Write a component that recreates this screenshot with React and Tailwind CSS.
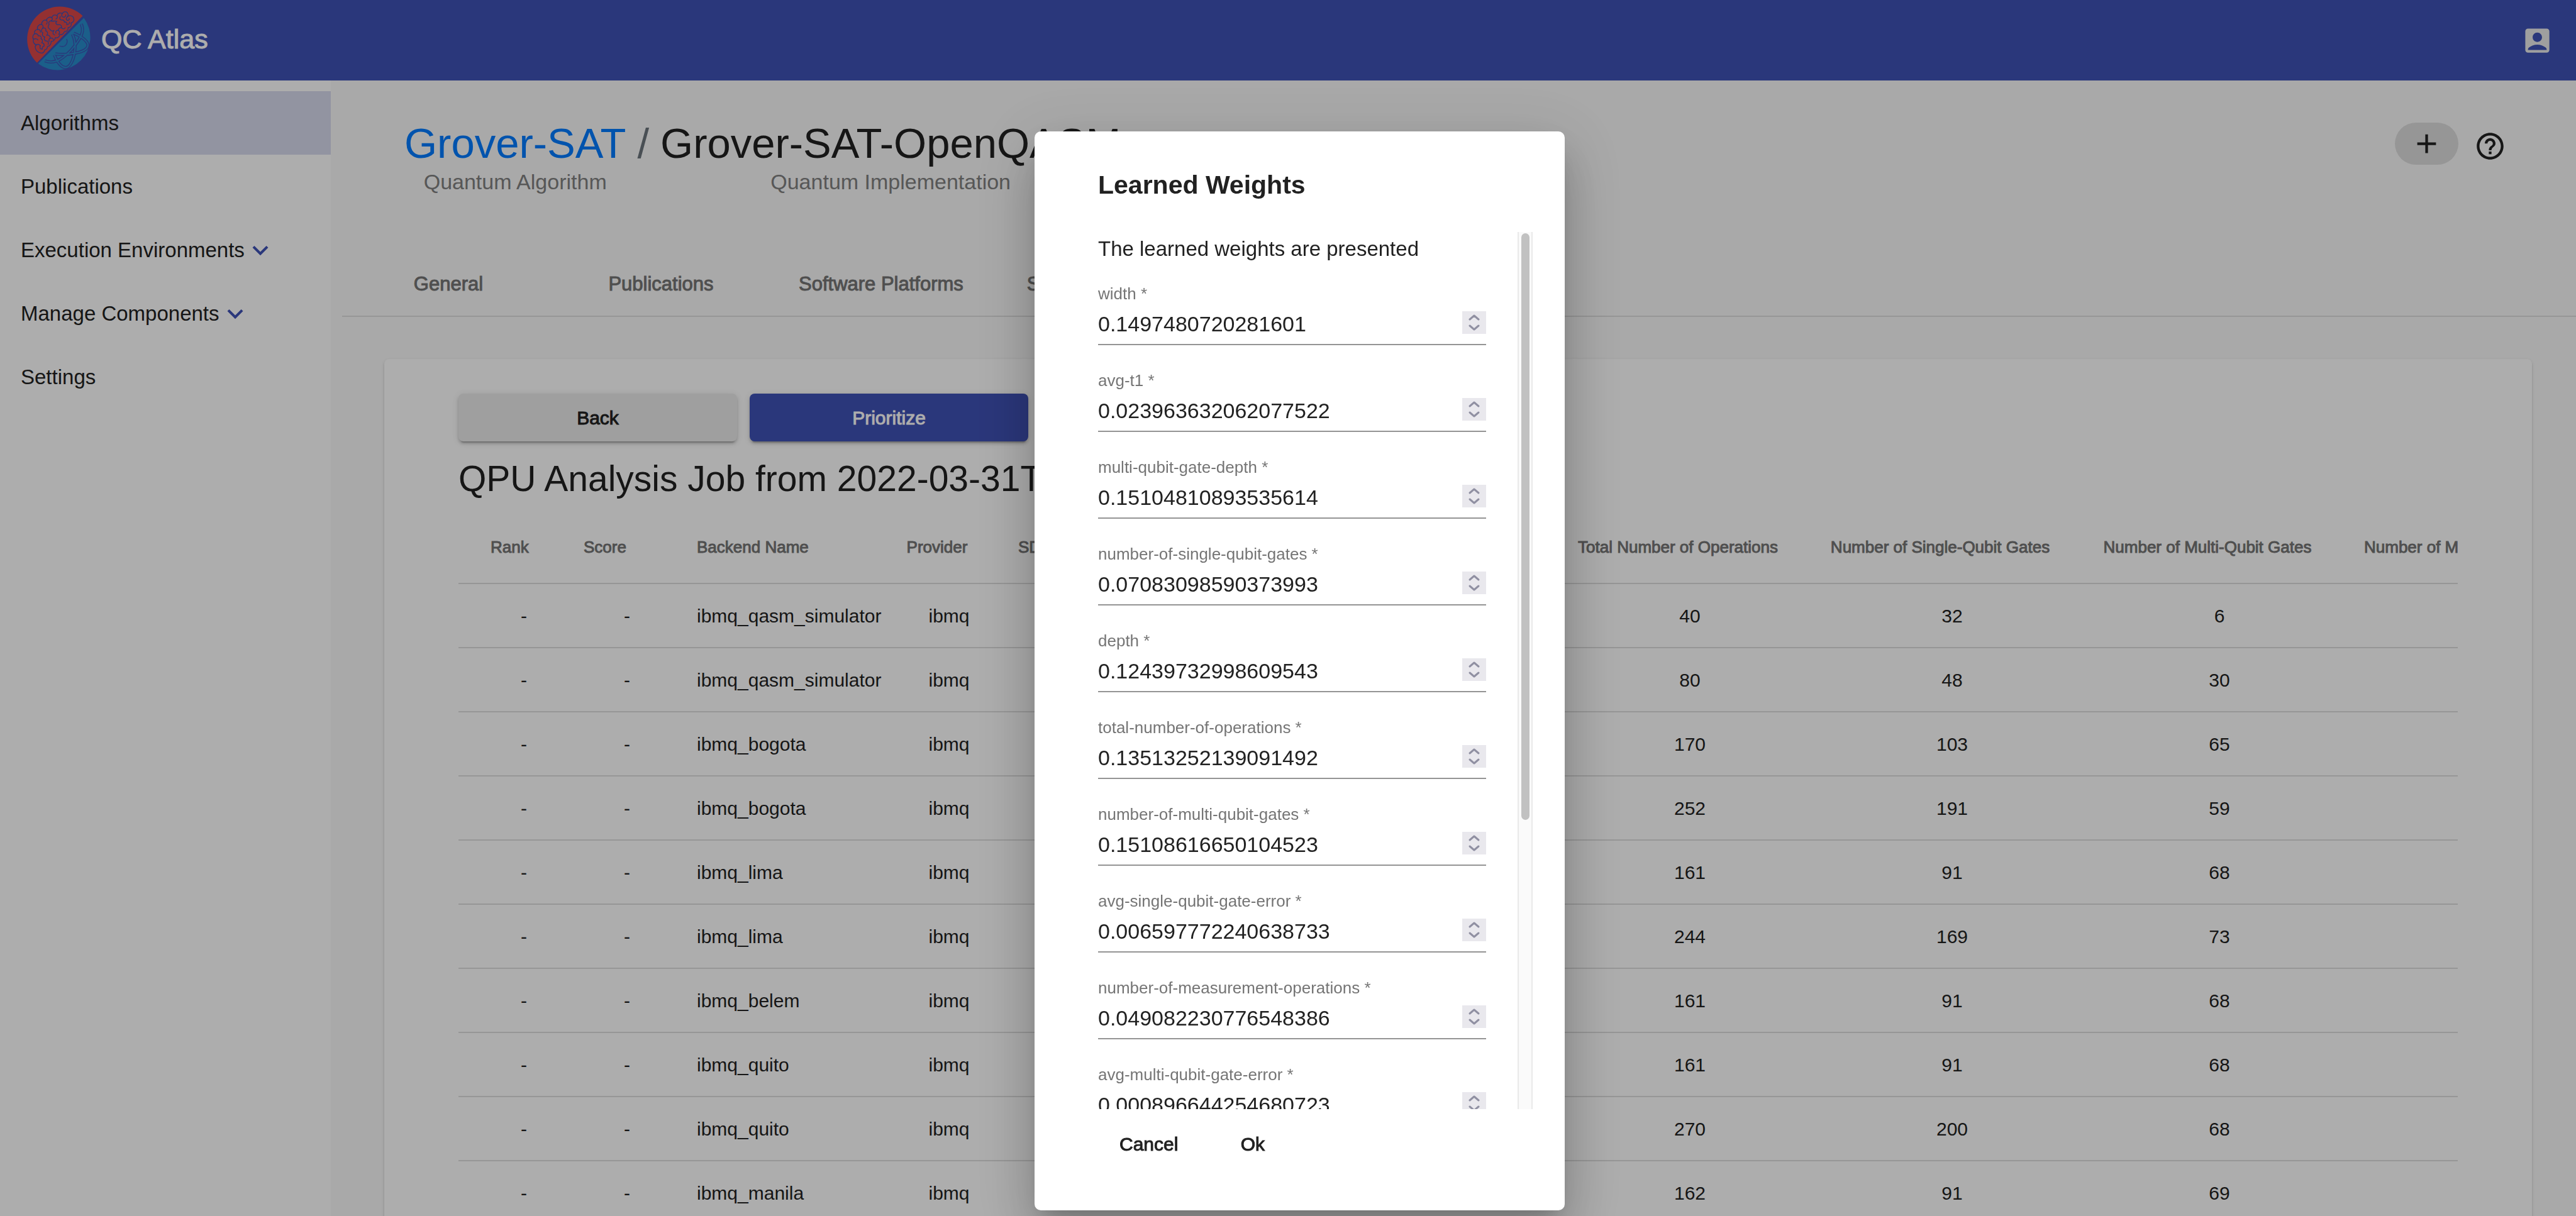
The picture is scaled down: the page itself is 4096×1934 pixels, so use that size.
import { MdAccountBox, MdAdd, MdExpandMore, MdHelpOutline } from "react-icons/md";

const navItems = [
  { label: "Algorithms", active: true },
  { label: "Publications" },
  { label: "Execution Environments", expandable: true },
  { label: "Manage Components", expandable: true },
  { label: "Settings" },
];

const tabs = ["General", "Publications", "Software Platforms", "Selection Criteria"];

const rows = [
  ["ibmq_qasm_simulator", 40, 32, 6],
  ["ibmq_qasm_simulator", 80, 48, 30],
  ["ibmq_bogota", 170, 103, 65],
  ["ibmq_bogota", 252, 191, 59],
  ["ibmq_lima", 161, 91, 68],
  ["ibmq_lima", 244, 169, 73],
  ["ibmq_belem", 161, 91, 68],
  ["ibmq_quito", 161, 91, 68],
  ["ibmq_quito", 270, 200, 68],
  ["ibmq_manila", 162, 91, 69],
];

const weights = [
  ["width", "0.1497480720281601"],
  ["avg-t1", "0.023963632062077522"],
  ["multi-qubit-gate-depth", "0.15104810893535614"],
  ["number-of-single-qubit-gates", "0.07083098590373993"],
  ["depth", "0.12439732998609543"],
  ["total-number-of-operations", "0.13513252139091492"],
  ["number-of-multi-qubit-gates", "0.15108616650104523"],
  ["avg-single-qubit-gate-error", "0.006597772240638733"],
  ["number-of-measurement-operations", "0.049082230776548386"],
  ["avg-multi-qubit-gate-error", "0.000896644254680723"],
];

const orbits = [
  "M332 120 C345 152 340 176 318 212 C290 258 262 290 222 318 C190 342 155 352 117 337",
  "M280 180 C296 215 300 245 292 290 C284 335 265 376 240 377 C212 376 190 345 173 303",
  "M287 174 C330 190 365 218 371 240 C374 268 345 282 300 291 C262 299 225 302 178 297",
];

function Logo() {
  return (
    <svg viewBox="0 0 420 420" className="size-[113px]" role="img" aria-label="QC Atlas logo">
      <path d="M340 72 A193 193 0 1 0 70 348 Z" fill="#db4849" />
      <path d="M347 84 A193 193 0 0 1 77 354 Z" fill="#288ccc" />
      <g fill="none" stroke="#3f51b5" strokeWidth="5" strokeLinecap="round" strokeLinejoin="round">
        <path d="M100 291 C84 292 66 282 62 266 C58 258 60 248 66 243 C50 238 44 222 50 210 C42 200 44 184 56 178 C50 166 60 152 74 152 C68 136 80 120 98 122 C96 104 112 92 126 98 C128 84 144 74 158 82 C160 68 176 62 188 70 C192 56 208 50 220 58 C226 44 246 42 252 58 C256 64 254 72 248 78 C262 64 284 70 287 86 C292 100 282 112 270 114 C278 126 268 142 254 140 C256 154 246 166 232 164 C228 178 216 186 204 182 C204 196 190 206 178 200 C176 214 166 224 154 222 C154 238 146 252 132 252 C132 264 124 272 116 272 C114 282 110 290 100 291 Z" />
        <path d="M66 243 C74 238 84 240 90 248 M50 210 C58 204 70 206 76 214 M56 178 C66 174 76 180 78 190 C90 186 98 196 94 206 M74 152 C84 150 92 158 90 168 M98 122 C106 126 108 136 104 144 C116 140 126 148 122 160" />
        <path d="M126 98 C132 104 132 114 126 120 M104 144 C94 152 94 166 104 172 M122 160 C134 164 136 178 128 186 M158 82 C164 90 160 100 150 102 C140 104 136 114 142 122 M142 122 C132 130 134 146 146 150 C150 160 162 164 170 158" />
        <path d="M150 102 C166 106 176 98 186 104 M188 70 C194 78 190 86 182 90 M220 58 C214 64 214 74 222 78 C232 82 242 74 240 66 M208 76 C200 84 206 98 218 96 C226 94 232 100 232 108" />
        <path d="M186 104 C178 112 182 124 194 124 C206 120 218 128 214 142 M248 78 C240 84 242 96 250 98 C258 100 262 92 260 88 M232 108 C242 106 250 114 246 124 C256 122 264 118 262 108 M214 142 C204 140 194 148 198 158 C186 154 176 164 182 174" />
        <path d="M214 142 C222 150 232 150 236 142 M198 158 C206 166 204 176 198 180 M170 158 C160 168 164 182 174 184 M128 186 C140 184 150 192 148 204 C160 200 168 206 166 214 M104 172 C98 184 106 196 116 196 M94 206 C104 212 104 224 98 230" />
        <path d="M116 196 C108 208 116 222 128 220 C136 222 140 232 136 240 M98 230 C108 232 114 240 112 250 C104 252 98 260 102 268 M90 248 C84 256 88 268 98 268 M148 204 C140 208 138 216 142 222" />
      </g>
      <g fill="none" strokeLinecap="butt">
        <path d={orbits.join(" ")} stroke="#3f51b5" strokeWidth="18" />
        <path d={orbits.join(" ")} stroke="#288ccc" strokeWidth="8" />
        <path d="M245 208 C252 222 248 240 236 248 C226 254 214 254 203 249" stroke="#3f51b5" strokeWidth="5" />
      </g>
    </svg>
  );
}

function Header() {
  return (
    <header className="flex h-32 shrink-0 items-center justify-between bg-[#3f51b5] pr-9 pl-10">
      <a href="#home" className="flex items-center gap-2 pb-1 text-[43px] leading-none text-white">
        <Logo />
        <span className="[-webkit-text-stroke:1px]">QC Atlas</span>
      </a>
      <button aria-label="Account" className="text-[51px] text-[#ebebeb]">
        <MdAccountBox />
      </button>
    </header>
  );
}

function Sidebar() {
  return (
    <nav className="w-[526px] shrink-0 bg-white pt-[17px]">
      {navItems.map((item) => (
        <a
          key={item.label}
          href="#nav"
          className={`flex h-[101px] items-center pl-[33px] text-[33px] leading-none ${item.active ? "bg-[#d7dbed]" : ""}`}
        >
          {item.label}
          {item.expandable && <MdExpandMore className="size-[50px] text-[#3f51b5]" />}
        </a>
      ))}
    </nav>
  );
}

function Heading() {
  return (
    <div className="flex items-start justify-between pr-[111px] pl-[99px]">
      <div className="flex">
        <div className="flex flex-col items-center">
          <a href="#algorithm" className="text-[67px] leading-[80px] text-[#007bff]">Grover-SAT</a>
          <span className="text-[34px] leading-[42px] text-[#808080]">Quantum Algorithm</span>
        </div>
        <span className="px-[18px] text-[67px] leading-[80px] text-[#6c757d]">/</span>
        <div className="flex flex-col items-center">
          <h1 className="text-[67px] leading-[80px]">Grover-SAT-OpenQASM</h1>
          <span className="text-[34px] leading-[42px] text-[#808080]">Quantum Implementation</span>
        </div>
      </div>
      <div className="flex items-start gap-[25px] pt-[7px] text-[51px]">
        <button aria-label="Add" className="flex h-[67px] w-[101px] items-center justify-center rounded-full bg-[#dedede]">
          <MdAdd />
        </button>
        <button aria-label="Help" className="pt-3">
          <MdHelpOutline />
        </button>
      </div>
    </div>
  );
}

function Tabs() {
  return (
    <div role="tablist" className="mt-[90px] flex border-b-2 border-[#dddddd]">
      {tabs.map((tab) => (
        <button
          key={tab}
          role="tab"
          className="h-[102px] min-w-[338px] px-[50px] pt-[2px] text-[31px] whitespace-nowrap text-[#757575] [-webkit-text-stroke:1px]"
        >
          {tab}
        </button>
      ))}
    </div>
  );
}

const buttonShadow =
  "shadow-[0_6px_2px_-4px_rgba(0,0,0,0.2),0_4px_4px_rgba(0,0,0,0.14),0_2px_11px_rgba(0,0,0,0.12)]";

function ResultTable() {
  const sortable = "pr-[38px] text-center";
  return (
    <div className="mt-[14px] overflow-hidden">
      <table className="w-[3709px] table-fixed border-collapse">
        <colgroup>
          <col className="w-[178px]" />
          <col className="w-[180px]" />
          <col className="w-[333px]" />
          <col className="w-[178px]" />
          <col className="w-[888px]" />
          <col className="w-[402px]" />
          <col className="w-[432px]" />
          <col className="w-[418px]" />
          <col className="w-[700px]" />
        </colgroup>
        <thead>
          <tr className="h-[118px] border-b-2 border-[#dddddd] text-left text-[26px] whitespace-nowrap text-[#757575] [&>th]:pt-1 [&>th]:font-normal [&>th]:[-webkit-text-stroke:1px]">
            <th className="pl-[51px]">Rank</th>
            <th className="pl-[21px]">Score</th>
            <th className="pl-[21px]">Backend Name</th>
            <th className={sortable}>Provider</th>
            <th className="pl-[21px]">SDK</th>
            <th className={sortable}>Total Number of Operations</th>
            <th className={sortable}>Number of Single-Qubit Gates</th>
            <th className={sortable}>Number of Multi-Qubit Gates</th>
            <th className="pl-[21px]">Number of Measurement Operations</th>
          </tr>
        </thead>
        <tbody>
          {rows.map(([backend, total, single, multi], i) => (
            <tr key={i} className="h-[102px] border-b-2 border-[#dddddd] text-center text-[30px]">
              <td className="pl-[30px]">-</td>
              <td>-</td>
              <td className="pl-[21px] text-left">{backend}</td>
              <td>ibmq</td>
              <td />
              <td>{total}</td>
              <td>{single}</td>
              <td>{multi}</td>
              <td />
            </tr>
          ))}
        </tbody>
      </table>
    </div>
  );
}

function JobCard() {
  return (
    <section className="mt-[67px] mr-[70px] ml-[67px] rounded-lg bg-white px-[118px] pt-[55px] shadow-[0_4px_2px_-2px_rgba(0,0,0,0.2),0_2px_2px_rgba(0,0,0,0.14),0_2px_6px_rgba(0,0,0,0.12)]">
      <div className="flex gap-5 text-[30px] [-webkit-text-stroke:1px]">
        <button className={`h-[76px] w-[443px] rounded-lg bg-[#ebebeb] ${buttonShadow}`}>Back</button>
        <button className={`h-[76px] w-[443px] rounded-lg bg-[#3f51b5] text-white ${buttonShadow}`}>Prioritize</button>
      </div>
      <h2 className="mt-6 text-[57px] leading-[70px]">QPU Analysis Job from 2022-03-31T</h2>
      <ResultTable />
    </section>
  );
}

function WeightField({ name, value }) {
  return (
    <div className="mb-[10px] border-b-2 border-[#949494] pt-7 pb-[10px]">
      <label htmlFor={name} className="block text-[26px] leading-9 text-[#757575]">
        {name} *
      </label>
      <div className="mt-2 flex h-11 items-center">
        <input
          id={name}
          type="number"
          step="any"
          required
          defaultValue={value}
          className="min-w-0 flex-1 text-[34px] leading-[44px] [appearance:textfield] outline-none"
        />
        <svg viewBox="0 0 38 36" className="mb-1 h-9 w-[38px] bg-[#e9e8ed]" fill="none" stroke="#9090a2" strokeWidth="3">
          <path d="M12 13 L19 7 L26 13 M12 23 L19 29 L26 23" strokeLinecap="round" strokeLinejoin="round" />
        </svg>
      </div>
    </div>
  );
}

function WeightsDialog() {
  return (
    <div className="fixed inset-0 flex items-end justify-center bg-black/32 pb-[9px] pl-[37px]">
      <div
        role="dialog"
        aria-labelledby="dialog-title"
        className="flex h-[calc(100%-209px)] w-[843px] flex-col rounded-[10px] bg-white p-[51px] shadow-[0_23px_32px_-15px_rgba(0,0,0,0.2),0_50px_80px_6px_rgba(0,0,0,0.14),0_19px_97px_17px_rgba(0,0,0,0.12)]"
      >
        <h2 id="dialog-title" className="mb-[41px] pl-[50px] text-[41px] leading-[68px] font-bold">
          Learned Weights
        </h2>
        <div className="flex min-h-0 flex-1">
          <div className="min-w-0 flex-1 overflow-hidden px-[50px]">
            <p className="pt-[2px] text-[33px] leading-[50px]">The learned weights are presented</p>
            {weights.map(([name, value]) => (
              <WeightField key={name} name={name} value={value} />
            ))}
          </div>
          <div className="flex w-6 flex-col items-center border-x-2 border-[#e9e9e9] bg-[#fafafa] pt-[2px]">
            <div className="h-[67%] w-[13px] rounded-full bg-[#c1c1c1]" />
          </div>
        </div>
        <div className="flex h-[110px] items-center gap-[17px] pl-[50px] text-[30px] [-webkit-text-stroke:1px]">
          <button className="h-[76px] min-w-[135px] px-[34px]">Cancel</button>
          <button className="h-[76px] min-w-[135px] px-[34px]">Ok</button>
        </div>
      </div>
    </div>
  );
}

export default function App() {
  return (
    <div className="flex h-screen flex-col overflow-hidden bg-[#fafafa] font-['Liberation_Sans',Arial,sans-serif] text-[#212121]">
      <Header />
      <div className="flex min-h-0 flex-1">
        <Sidebar />
        <main className="min-w-0 flex-1 overflow-hidden pt-[60px] pl-[18px]">
          <Heading />
          <Tabs />
          <JobCard />
        </main>
      </div>
      <WeightsDialog />
    </div>
  );
}
